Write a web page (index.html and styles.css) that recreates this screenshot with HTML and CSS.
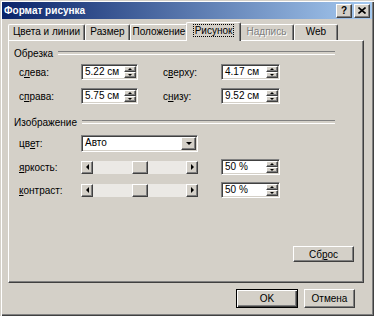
FILE: index.html
```html
<!DOCTYPE html>
<html lang="ru">
<head>
    <meta charset="UTF-8">
    <meta name="viewport" content="width=device-width, initial-scale=1.0">
    <title>Формат рисунка</title>
    <link rel="stylesheet" href="styles.css">
</head>
<body>
    <div class="window">
        <div class="titlebar">
            <span class="title">Формат рисунка</span>
            <div class="caption-buttons">
                <span class="caption-btn help">?</span>
                <span class="caption-btn close">
                    <svg width="8" height="7" viewBox="0 0 8 7">
                        <path d="M0.5 0.5 L7.5 6.5 M7.5 0.5 L0.5 6.5" stroke="#000" stroke-width="1.6" fill="none"/>
                    </svg>
                </span>
            </div>
        </div>
        <div class="client">
            <div class="tabs">
                <div class="tab tab-colors">Цвета и линии</div>
                <div class="tab tab-size">Размер</div>
                <div class="tab tab-position">Положение</div>
                <div class="tab active"><span class="focus">Рисунок</span></div>
                <div class="tab tab-textbox disabled">Надпись</div>
                <div class="tab tab-web">Web</div>
            </div>
            <div class="panel">
                <div class="group-head"><span>Обрезка</span></div>
                <div class="crop-grid">
                    <label>с<u>л</u>ева:</label>
                    <div class="spin small">
                        <span class="value">5.22 см</span>
                        <span class="arrows"><i class="up"></i><i class="down"></i></span>
                    </div>
                    <label>с<u>в</u>ерху:</label>
                    <div class="spin">
                        <span class="value">4.17 см</span>
                        <span class="arrows"><i class="up"></i><i class="down"></i></span>
                    </div>
                    <label>с<u>п</u>рава:</label>
                    <div class="spin small">
                        <span class="value">5.75 см</span>
                        <span class="arrows"><i class="up"></i><i class="down"></i></span>
                    </div>
                    <label>с<u>н</u>изу:</label>
                    <div class="spin">
                        <span class="value">9.52 см</span>
                        <span class="arrows"><i class="up"></i><i class="down"></i></span>
                    </div>
                </div>

                <div class="group-head second"><span>Изображение</span></div>
                <div class="image-grid">
                    <label>цв<u>е</u>т:</label>
                    <div class="combo">
                        <span class="value">Авто</span>
                        <span class="drop"><i class="down"></i></span>
                    </div>
                    <span></span>
                    <span></span>

                    <label><u>я</u>ркость:</label>
                    <div class="slider">
                        <span class="sbtn"><i class="left"></i></span>
                        <span class="track-before"></span>
                        <span class="thumb"></span>
                        <span class="track-after"></span>
                        <span class="sbtn"><i class="right"></i></span>
                    </div>
                    <span></span>
                    <div class="spin">
                        <span class="value">50 %</span>
                        <span class="arrows"><i class="up"></i><i class="down"></i></span>
                    </div>

                    <label><u>к</u>онтраст:</label>
                    <div class="slider">
                        <span class="sbtn"><i class="left"></i></span>
                        <span class="track-before"></span>
                        <span class="thumb"></span>
                        <span class="track-after"></span>
                        <span class="sbtn"><i class="right"></i></span>
                    </div>
                    <span></span>
                    <div class="spin">
                        <span class="value">50 %</span>
                        <span class="arrows"><i class="up"></i><i class="down"></i></span>
                    </div>
                </div>

                <button class="btn reset">Сб<u>р</u>ос</button>
            </div>
            <div class="footer">
                <button class="btn ok">OK</button>
                <button class="btn cancel">Отмена</button>
            </div>
        </div>
    </div>
</body>
</html>
```

FILE: styles.css
```css
* {
    box-sizing: border-box;
}

body {
    margin: 0;
    font-family: "Liberation Sans", Arial, sans-serif;
    font-size: 10px;
    color: #000;
    background-color: #d4d0c8;
}

.window {
    width: 374px;
    height: 316px;
    padding: 2px;
    display: flex;
    flex-direction: column;
    background-color: #d4d0c8;
    box-shadow: inset 1px 1px #d4d0c8, inset 2px 2px #fff, inset -1px -1px #404040, inset -2px -2px #808080;
}

/* title bar */
.titlebar {
    height: 17px;
    padding: 0 2px;
    display: flex;
    align-items: center;
    justify-content: space-between;
    background: linear-gradient(to right, #0a246a, #a6caf0);
}

.title {
    color: #fff;
    font-weight: bold;
    font-size: 10px;
}

.caption-buttons {
    display: flex;
    gap: 2px;
}

.caption-btn {
    width: 16px;
    height: 14px;
    display: flex;
    align-items: center;
    justify-content: center;
    background-color: #d4d0c8;
    border: 1px solid;
    border-color: #fff #404040 #404040 #fff;
    box-shadow: inset -1px -1px #808080;
    font-weight: bold;
    font-size: 10px;
}

.client {
    flex: 1;
    display: flex;
    flex-direction: column;
    padding: 3px 8px 0 6px;
}

/* tabs */
.tabs {
    display: flex;
    align-items: flex-end;
    height: 18px;
}

.tab {
    height: 16px;
    line-height: 14px;
    text-align: center;
    border-top: 1px solid #fff;
    border-left: 1px solid #fff;
    border-right: 1px solid #404040;
    border-radius: 2px 2px 0 0;
    box-shadow: inset -1px 0 #808080;
    white-space: nowrap;
}

.tab-colors { width: 77px; }
.tab-size { width: 45px; }
.tab-position { width: 58px; }
.tab-textbox { width: 55px; }
.tab-web { width: 44px; }

.tab.active {
    position: relative;
    z-index: 1;
    width: 55px;
    height: 19px;
    margin: 0 -2px -1px -2px;
    line-height: 16px;
    background-color: #d4d0c8;
}

.focus {
    outline: 1px dotted #000;
    outline-offset: 0;
    padding: 0 1px;
}

.tab.disabled {
    color: #808080;
    text-shadow: 1px 1px #fff;
}

/* page */
.panel {
    height: 243px;
    padding: 6px 0 0 5px;
    display: flex;
    flex-direction: column;
    border: 1px solid;
    border-color: #fff #404040 #404040 #fff;
    box-shadow: inset -1px -1px #808080;
}

.group-head {
    width: 321px;
    height: 12px;
    display: flex;
    align-items: center;
}

.group-head::after {
    content: "";
    flex: 1;
    height: 2px;
    margin-left: 5px;
    border-top: 1px solid #808080;
    border-bottom: 1px solid #fff;
}

.group-head.second {
    margin-top: 12px;
}

.crop-grid {
    margin: 5px 0 0 5px;
    display: grid;
    grid-template-columns: 62px 82px 58px 59px;
    grid-auto-rows: 16px;
    row-gap: 8px;
    align-items: center;
}

.image-grid {
    margin: 7px 0 0 5px;
    display: grid;
    grid-template-columns: 62px 117px 23px 59px;
    grid-template-rows: 17px 16px 16px;
    row-gap: 7px;
    align-items: center;
}

label u,
.btn u {
    text-decoration-thickness: 1px;
}

/* sunken fields */
.spin,
.combo {
    height: 16px;
    display: flex;
    align-items: stretch;
    background-color: #fff;
    border: 1px solid;
    border-color: #808080 #fff #fff #808080;
    box-shadow: inset 1px 1px #404040, inset -1px -1px #d4d0c8;
    padding: 1px;
}

.spin.small {
    width: 57px;
}

.spin .value,
.combo .value {
    flex: 1;
    padding-left: 2px;
    line-height: 12px;
}

.arrows {
    width: 12px;
    display: flex;
    flex-direction: column;
}

.arrows i,
.drop,
.sbtn {
    display: flex;
    align-items: center;
    justify-content: center;
    background-color: #d4d0c8;
    border: 1px solid;
    border-color: #fff #404040 #404040 #fff;
    box-shadow: inset -1px -1px #808080;
}

.arrows i {
    flex: 1;
}

.up::before,
.down::before,
.left::before,
.right::before {
    content: "";
    width: 0;
    height: 0;
    border: 2px solid transparent;
}

.up::before {
    border-bottom: 2px solid #000;
    border-top-width: 0;
}

.down::before {
    border-top: 2px solid #000;
    border-bottom-width: 0;
}

.combo {
    height: 17px;
}

.drop {
    width: 15px;
}

.drop .down::before {
    display: block;
    border-width: 3px 3px 0 3px;
    border-color: #000 transparent transparent transparent;
}

/* sliders */
.slider {
    height: 13px;
    display: flex;
    background-color: #ebe9e5;
}

.sbtn {
    width: 12px;
}

.left::before {
    display: block;
    border-width: 3px 3px 3px 0;
    border-color: transparent #000 transparent transparent;
}

.right::before {
    display: block;
    border-width: 3px 0 3px 3px;
    border-color: transparent transparent transparent #000;
}

.track-before {
    width: 39px;
}

.thumb {
    width: 16px;
    background-color: #d4d0c8;
    border: 1px solid;
    border-color: #fff #404040 #404040 #fff;
    box-shadow: inset -1px -1px #808080;
}

.track-after {
    flex: 1;
}

/* buttons */
.btn {
    font-family: "Liberation Sans", Arial, sans-serif;
    font-size: 10px;
    color: #000;
    padding: 0;
    background-color: #d4d0c8;
    border: 1px solid;
    border-color: #fff #404040 #404040 #fff;
    box-shadow: inset -1px -1px #808080;
}

.reset {
    width: 61px;
    height: 16px;
    margin: auto 9px 20px 0;
    align-self: flex-end;
}

.footer {
    margin-top: 6px;
    padding-right: 9px;
    display: flex;
    justify-content: flex-end;
    gap: 6px;
}

.ok {
    width: 62px;
    height: 19px;
    border: 1px solid #000;
    box-shadow: inset 1px 1px #fff, inset -1px -1px #404040, inset -2px -2px #808080;
}

.cancel {
    width: 51px;
    height: 19px;
}
```
